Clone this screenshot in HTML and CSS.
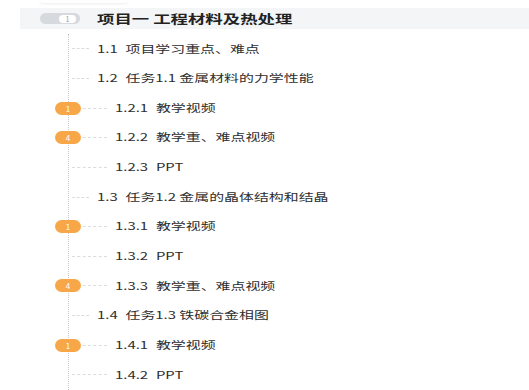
FILE: index.html
```html
<!DOCTYPE html>
<html lang="zh-CN">
<head>
    <meta charset="UTF-8">
    <meta name="viewport" content="width=device-width, initial-scale=1.0">
    <title>课程目录</title>
    <link rel="stylesheet" href="styles.css">
</head>
<body>

    <div class="top-edge"></div>

    <!-- 章节标题 -->
    <div class="chapter">
        <div class="chapter-count"><span>1</span></div>
        <div class="chapter-title">项目一 工程材料及热处理</div>
    </div>

    <!-- 章节目录 -->
    <ul class="lessons">
        <li class="lesson"><span class="dash"></span><span class="label"><span class="num">1.1</span>项目学习重点、难点</span></li>
        <li class="lesson"><span class="dash"></span><span class="label"><span class="num">1.2</span>任务1.1 金属材料的力学性能</span></li>
        <li class="lesson sub"><span class="badge">1</span><span class="dash"></span><span class="label"><span class="num">1.2.1</span>教学视频</span></li>
        <li class="lesson sub"><span class="badge">4</span><span class="dash"></span><span class="label"><span class="num">1.2.2</span>教学重、难点视频</span></li>
        <li class="lesson sub"><span class="dash"></span><span class="label"><span class="num">1.2.3</span>PPT</span></li>
        <li class="lesson"><span class="dash"></span><span class="label"><span class="num">1.3</span>任务1.2 金属的晶体结构和结晶</span></li>
        <li class="lesson sub"><span class="badge">1</span><span class="dash"></span><span class="label"><span class="num">1.3.1</span>教学视频</span></li>
        <li class="lesson sub"><span class="dash"></span><span class="label"><span class="num">1.3.2</span>PPT</span></li>
        <li class="lesson sub"><span class="badge">4</span><span class="dash"></span><span class="label"><span class="num">1.3.3</span>教学重、难点视频</span></li>
        <li class="lesson"><span class="dash"></span><span class="label"><span class="num">1.4</span>任务1.3 铁碳合金相图</span></li>
        <li class="lesson sub"><span class="badge">1</span><span class="dash"></span><span class="label"><span class="num">1.4.1</span>教学视频</span></li>
        <li class="lesson sub"><span class="dash"></span><span class="label"><span class="num">1.4.2</span>PPT</span></li>
    </ul>

</body>
</html>
```

FILE: styles.css
```css
body {
    margin: 0;
    font-family: "Noto Sans CJK SC", "Liberation Sans", sans-serif;
    color: #333;
    background: #fff;
    overflow: hidden;
}
.top-edge {
    width: 88px;
    height: 3px;
    margin-left: 40px;
    background: #fff;
    border-radius: 0 0 4px 4px;
    box-shadow: 0 1px 3px rgba(0, 0, 0, 0.08);
}
.chapter {
    display: flex;
    align-items: center;
    height: 21px;
    margin: 5px 0 0 20px;
    background: #f4f5f7;
}
.chapter-count {
    display: flex;
    align-items: center;
    justify-content: flex-end;
    box-sizing: border-box;
    width: 40px;
    height: 11px;
    margin-left: 20px;
    padding-right: 4px;
    border-radius: 6px;
    background: #d6d9dd;
}
.chapter-count span {
    width: 17px;
    height: 8px;
    border-radius: 4px;
    background: #fff;
    color: #999;
    font-size: 7px;
    line-height: 8px;
    text-align: center;
}
.chapter-title {
    margin-left: 17px;
    font-size: 12px;
    font-weight: bold;
    line-height: 21px;
    color: #222;
    white-space: nowrap;
    transform: scaleX(1.45);
    transform-origin: left center;
}
.lessons {
    list-style: none;
    margin: 5px 0 0 68px;
    padding: 0;
    border-left: 1px dotted #c8c8c8;
}
.lesson {
    position: relative;
    display: flex;
    align-items: center;
    height: 29.65px;
}
.dash {
    width: 17px;
    margin: 0 8px 0 3px;
    border-top: 1px dashed #dcdcdc;
}
.lesson.sub .dash {
    width: 35px;
}
.label {
    font-size: 10.5px;
    line-height: 1;
    color: #2e2e2e;
    white-space: nowrap;
    transform: scaleX(1.42);
    transform-origin: left center;
}
.num {
    margin-right: 5.5px;
}
.badge {
    position: absolute;
    left: -14px;
    top: 50%;
    width: 26px;
    height: 13px;
    margin-top: -6.5px;
    border-radius: 7px;
    background: #f8a748;
    color: #fff;
    font-size: 8px;
    line-height: 13px;
    text-align: center;
}
```
